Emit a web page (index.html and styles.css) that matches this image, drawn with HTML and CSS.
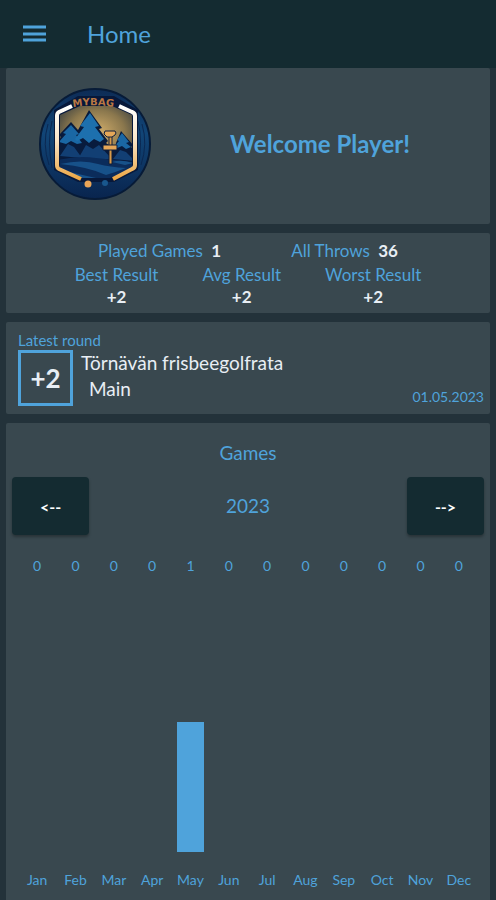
FILE: index.html
```
<!DOCTYPE html>
<html lang="en">

<head>
	<meta charset="utf-8">
	<meta name="viewport" content="width=device-width, initial-scale=1">
	<title>MyBag - Home</title>
	<link rel="stylesheet" href="styles.css">
</head>

<body>
	<header class="toolbar">
		<button class="menu-button" type="button" aria-label="Menu">
			<svg width="24" height="18" viewBox="0 0 24 18" aria-hidden="true">
				<path d="M0 2h23M0 9h23M0 15h23" stroke="currentColor" stroke-width="3" />
			</svg>
		</button>
		<h1>Home</h1>
	</header>
	<main>
		<section class="card welcome">
			<svg class="logo" viewBox="0 0 114 114" role="img" aria-label="MyBag">
				<defs>
					<linearGradient id="rim" x1="0" y1="0" x2="0" y2="1">
						<stop offset="0" stop-color="#0d2b55" />
						<stop offset=".4" stop-color="#114577" />
						<stop offset="1" stop-color="#09244e" />
					</linearGradient>
					<linearGradient id="frame" x1="0" y1="0" x2="0" y2="1">
						<stop offset="0" stop-color="#fff" />
						<stop offset=".45" stop-color="#f9e6cb" />
						<stop offset="1" stop-color="#eda846" />
					</linearGradient>
					<radialGradient id="sky" cx=".5" cy=".5" r=".6">
						<stop offset="0" stop-color="#d5b06c" />
						<stop offset=".6" stop-color="#8a774d" />
						<stop offset="1" stop-color="#3a3f40" />
					</radialGradient>
					<clipPath id="scene">
						<path d="M22 28l20-9h32l20 9v54l-22 9H44l-22-9z" />
					</clipPath>
					<path id="arc" d="M35 20q22-4 46 1" />
				</defs>
				<circle cx="57" cy="57" r="55" fill="url(#rim)" stroke="#071b37" stroke-width="2" />
				<path d="M10 37q-6 20 1 41M104 37q6 20-1 41M14 34q-5 20 0 47M100 34q5 20 0 47" fill="none" stroke="#0a2852" stroke-width="1" />
				<path d="M16 23l24-14h36l24 14v60l-24 12H40L16 83z" fill="#07183a" />
				<g clip-path="url(#scene)">
					<path d="M20 14h78v64H20z" fill="url(#sky)" />
					<path d="M18 58l5-8-2-2 12-13 7 8 11-20 13 18-3 1 9 12-2 2 9 7 1-7 5-12 12 14-2 2 5 6v40H18z" fill="#081b3d" />
					<path d="M33 38l8 9-3 1 6 8-5 1-6-3-5 3-7-2 7-8-3-1z" fill="#1a67a4" />
					<path d="M52 26l9 13-4 1 9 12-4 3-6-3-5 4-6-5-6 3-2-2 9-12-4-1z" fill="#1d70ae" />
					<path d="M84 46l7 9-3 1 5 4-5 2-4-3-7 3-2-1 6-7-2-1z" fill="#1a67a4" />
					<path d="M22 69l8-12 6 3 8 11zM40 72l8-14 7 4 6-4 13 14zM75 72l7-9 6 2 9 9z" fill="#123f74" />
					<path d="M20 73q20-5 38-2l38 4v22H20z" fill="#0b2c5b" />
					<path d="M22 77q22-5 38 0 12 3 28 4-10 4-20 7-17-8-46-11z" fill="#175189" />
					<path d="M22 83l36 8H42zM74 75q9-3 21 1l-8 2z" fill="#175189" />
				</g>
				<path d="M34 19l-13 6q-2 1-2 4v49q0 3 2 4l22 10M81 19l13 6q3 1 3 4v49q0 3-3 4L75 92" fill="none" stroke="url(#frame)" stroke-width="4" />
				<!-- disc golf basket -->
				<path d="M71 47h3v30h-3z" fill="#d99a48" stroke="#101f3a" stroke-width="1" />
				<path d="M67 44h10q2 2 0 4l-3 2h-5l-3-3zM65 58h14v5H65z" fill="#e5a758" stroke="#101f3a" stroke-width="1" />
				<text class="logo-text"><textPath href="#arc">MYBAG</textPath></text>
				<circle cx="50" cy="97" r="3.5" fill="#eaa557" />
				<circle cx="67" cy="96" r="3" fill="#19578d" />
			</svg>
			<h2>Welcome Player!</h2>
		</section>

		<section class="card stats">
			<div class="totals">
				<p>Played Games <b>1</b></p>
				<p>All Throws <b>36</b></p>
			</div>
			<div class="results">
				<p>Best Result <b>+2</b></p>
				<p>Avg Result <b>+2</b></p>
				<p>Worst Result <b>+2</b></p>
			</div>
		</section>

		<section class="card latest">
			<h3>Latest round</h3>
			<div class="round">
				<div class="score">+2</div>
				<div class="course">
					<p>Törnävän frisbeegolfrata</p>
					<p class="layout">Main</p>
				</div>
				<time datetime="2023-05-01">01.05.2023</time>
			</div>
		</section>

		<section class="card games">
			<h3>Games</h3>
			<div class="year">
				<button type="button" aria-label="Previous year">&lt;--</button>
				<span>2023</span>
				<button type="button" aria-label="Next year">--&gt;</button>
			</div>
			<ol class="chart">
				<li><span>0</span><div class="track"></div><span>Jan</span></li>
				<li><span>0</span><div class="track"></div><span>Feb</span></li>
				<li><span>0</span><div class="track"></div><span>Mar</span></li>
				<li><span>0</span><div class="track"></div><span>Apr</span></li>
				<li><span>1</span><div class="track"><div class="bar" style="height: 50%"></div></div><span>May</span></li>
				<li><span>0</span><div class="track"></div><span>Jun</span></li>
				<li><span>0</span><div class="track"></div><span>Jul</span></li>
				<li><span>0</span><div class="track"></div><span>Aug</span></li>
				<li><span>0</span><div class="track"></div><span>Sep</span></li>
				<li><span>0</span><div class="track"></div><span>Oct</span></li>
				<li><span>0</span><div class="track"></div><span>Nov</span></li>
				<li><span>0</span><div class="track"></div><span>Dec</span></li>
			</ol>
		</section>
	</main>
</body>

</html>
```

FILE: styles.css
```
* {
	box-sizing: border-box;
}

body {
	margin: 0;
	background-color: #23323a;
	color: #4fa3db;
	font-family: Lato, sans-serif;
	font-size: 17px;
	line-height: 24px;
}

h1,
h2,
h3,
p,
ol {
	margin: 0;
	padding: 0;
	font-weight: 400;
}

button {
	border: 0;
	font-family: inherit;
	cursor: pointer;
}

.toolbar {
	display: flex;
	align-items: center;
	gap: 40px;
	height: 68px;
	padding: 0 23px;
	background-color: #142b31;
}

.toolbar h1 {
	font-size: 24px;
}

.menu-button {
	display: flex;
	padding: 0;
	background: none;
	color: inherit;
}

main {
	display: flex;
	flex-direction: column;
	gap: 9px;
	padding: 0 6px;
}

.card {
	background-color: #39484f;
	border-radius: 2px;
}

.welcome {
	display: flex;
	align-items: center;
	padding: 19px 2px 23px 32px;
}

.welcome h2 {
	flex: 1;
	font-size: 24px;
	font-weight: 700;
	text-align: center;
}

.logo {
	width: 114px;
	height: 114px;
}

.logo-text {
	fill: #b97743;
	font-family: "DejaVu Sans", sans-serif;
	font-size: 10px;
	font-weight: 700;
}

.stats {
	padding: 6px 12px;
}

.stats b {
	color: #e8eef4;
	font-weight: 700;
}

.totals,
.results {
	display: flex;
	justify-content: center;
}

.totals {
	gap: 70px;
}

.totals b {
	margin-left: 4px;
}

.results {
	gap: 44px;
	text-align: center;
}

.results b {
	display: block;
	line-height: 20px;
}

.latest {
	padding: 8px 6px 8px 12px;
}

.latest h3 {
	font-size: 15px;
	line-height: 20px;
}

.round {
	display: flex;
	gap: 8px;
}

.score {
	display: grid;
	place-items: center;
	width: 55px;
	height: 56px;
	border: 3px solid #4fa3db;
	color: #e8eef4;
	font-size: 26px;
	font-weight: 700;
}

.course {
	flex: 1;
	color: #e8eef4;
	font-size: 19px;
	line-height: 26px;
}

.layout {
	padding-left: 8px;
}

.round time {
	align-self: flex-end;
	font-size: 14px;
	line-height: 18px;
}

.games {
	padding: 18px 6px 12px;
	text-align: center;
}

.games h3,
.year {
	font-size: 19px;
}

.year {
	display: flex;
	align-items: center;
	justify-content: space-between;
	margin-top: 12px;
}

.year button {
	width: 77px;
	height: 58px;
	border-radius: 4px;
	background-color: #142b31;
	box-shadow: 0 2px 3px rgb(0 0 0 / .3);
	color: #fff;
	font-size: 16px;
	font-weight: 700;
}

.chart {
	display: flex;
	margin-top: 19px;
	padding: 0 6px;
	list-style: none;
	font-size: 14px;
}

.chart li {
	flex: 1 1 0;
}

.track {
	display: flex;
	align-items: flex-end;
	justify-content: center;
	height: 260px;
	margin: 14px 0 16px;
}

.bar {
	width: 27px;
	background-color: #4fa3db;
}
```
